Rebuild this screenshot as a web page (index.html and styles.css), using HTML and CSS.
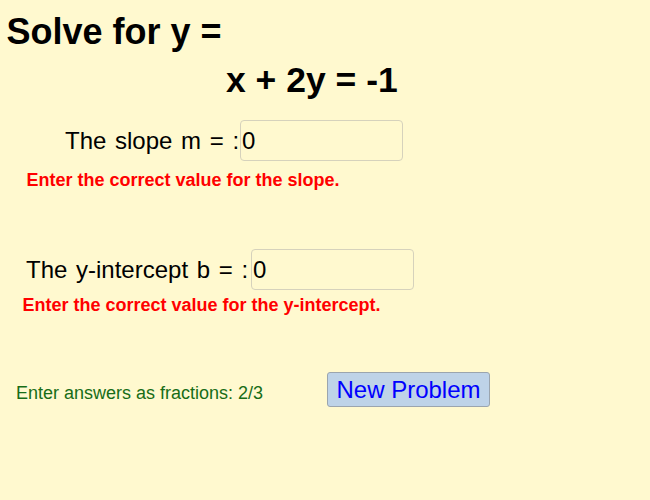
FILE: index.html
```html
<!DOCTYPE html>
<html lang="en">
<head>
<meta charset="utf-8">
<title>Solve for y</title>
<link rel="stylesheet" href="styles.css">
</head>
<body>
<main class="page">
  <h1 class="title">Solve for y =</h1>
  <div class="equation">x + 2y = -1</div>

  <div class="field field-slope">
    <label class="field-label" for="slope">The slope m = :</label>
    <input class="field-input" id="slope" type="text" value="0">
  </div>
  <p class="error error-slope">Enter the correct value for the slope.</p>

  <div class="field field-intercept">
    <label class="field-label" for="intercept">The y-intercept b = :</label>
    <input class="field-input" id="intercept" type="text" value="0">
  </div>
  <p class="error error-intercept">Enter the correct value for the y-intercept.</p>

  <div class="footer">
    <span class="hint">Enter answers as fractions: 2/3</span>
    <button class="new-problem" type="button">New Problem</button>
  </div>
</main>
</body>
</html>
```

FILE: styles.css
```css
html, body {
  margin: 0;
  padding: 0;
  background: #fff9cf;
}

body {
  font-family: "Liberation Sans", Arial, sans-serif;
  color: #000;
}

.page {
  padding-top: 12px;
}

.title {
  margin: 0 0 0 6.5px;
  font-size: 36px;
  font-weight: bold;
  line-height: 40px;
}

.equation {
  margin: 8px 0 0 226px;
  font-size: 35.5px;
  font-weight: bold;
  line-height: 40px;
}

.field {
  display: flex;
  align-items: center;
  height: 41px;
}

.field-slope {
  margin-top: 20px;
  padding-left: 65px;
}

.field-slope .field-label {
  width: 175px;
}

.field-intercept {
  margin-top: 58px;
  padding-left: 26px;
}

.field-intercept .field-label {
  width: 225px;
}

.field-label {
  font-size: 24px;
  line-height: 41px;
  word-spacing: 2px;
  white-space: nowrap;
}

.field-input {
  box-sizing: border-box;
  width: 163px;
  height: 41px;
  margin: 0;
  padding: 0 1px;
  border: 1px solid #d6d2bc;
  border-radius: 4px;
  background: transparent;
  font-family: "Liberation Sans", Arial, sans-serif;
  font-size: 24px;
  color: #000;
  outline: none;
}

.error {
  margin: 0;
  font-size: 18px;
  font-weight: bold;
  line-height: 22px;
  color: #ff0000;
}

.error-slope {
  margin: 8px 0 0 26.5px;
}

.error-intercept {
  margin: 4px 0 0 22.5px;
}

.footer {
  display: flex;
  align-items: flex-start;
  margin-top: 56px;
}

.hint {
  box-sizing: border-box;
  width: 327px;
  margin-top: 10px;
  padding-left: 16px;
  font-size: 18px;
  line-height: 22px;
  color: #176d17;
}

.new-problem {
  box-sizing: border-box;
  width: 163px;
  height: 35px;
  padding: 0;
  border: 1px solid #9ba5ae;
  border-radius: 3px;
  background: #bed3e8;
  font-family: "Liberation Sans", Arial, sans-serif;
  font-size: 24px;
  color: #0000ff;
}
```
